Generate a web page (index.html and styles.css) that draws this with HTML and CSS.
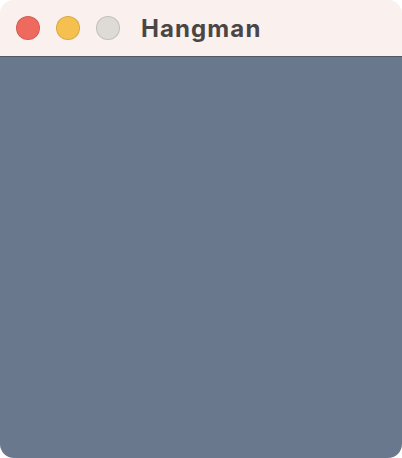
FILE: index.html
```html
<!DOCTYPE html>
<html lang="en">
<head>
    <meta charset="UTF-8">
    <meta name="viewport" content="width=device-width, initial-scale=1.0">
    <title>Hangman</title>
    <link rel="stylesheet" href="styles.css">
</head>
<body>
    <div class="window">
        <div class="titlebar">
            <div class="lights">
                <span class="light close"></span>
                <span class="light minimize"></span>
                <span class="light zoom"></span>
            </div>
            <h1>Hangman</h1>
        </div>
        <div class="content"></div>
    </div>
</body>
</html>
```

FILE: styles.css
```css
* {
    margin: 0;
    padding: 0;
    box-sizing: border-box;
}

html, body {
    height: 100%;
}

body {
    background-color: #ffffff;
    font-family: Inter, "Liberation Sans", sans-serif;
}

.window {
    height: 100%;
    display: flex;
    flex-direction: column;
    border-radius: 14px;
    overflow: hidden;
}

.titlebar {
    height: 57px;
    display: flex;
    align-items: center;
    padding-left: 16px;
    background-color: #faf0ee;
    border-bottom: 1px solid #4e5868;
}

.lights {
    display: flex;
    gap: 16px;
}

.light {
    width: 24px;
    height: 24px;
    border-radius: 50%;
    border: 1px solid rgba(0,0,0,0.12);
}

.close {
    background-color: #ee6a5f;
}

.minimize {
    background-color: #f5c04f;
}

.zoom {
    background-color: #dedad6;
}

h1 {
    margin-left: 21px;
    padding-top: 1px;
    font-size: 24px;
    font-weight: 700;
    letter-spacing: 1.1px;
    color: #4a4646;
}

.content {
    flex: 1;
    background-color: #6a788d;
}
```
